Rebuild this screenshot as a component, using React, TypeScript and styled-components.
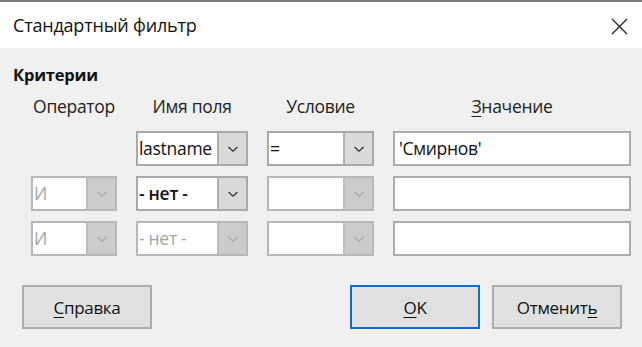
import React from "react"
import styled, { createGlobalStyle } from "styled-components"

const GlobalStyle = createGlobalStyle`
  html, body {
    margin: 0;
    padding: 0;
    background: #f0f0f0;
  }
  body {
    font-family: "Open Sans", "Noto Sans", sans-serif;
    color: #1a1a1a;
  }
`

const Window = styled.div`
  width: 642px;
  height: 347px;
  display: flex;
  flex-direction: column;
  background: #f0f0f0;
  overflow: hidden;
`

const TitleBar = styled.div`
  height: 46px;
  border-top: 2px solid #7a7a7a;
  background: #ffffff;
  display: flex;
  align-items: center;
  justify-content: space-between;
  padding: 0 14px 0 13px;
`

const Title = styled.div`
  font-size: 18px;
  color: #111;
  letter-spacing: -0.2px;
`

const CloseIcon = styled.svg`
  width: 17px;
  height: 17px;
  margin-top: 2px;
`

const Body = styled.div`
  flex: 1;
  display: flex;
  flex-direction: column;
  padding: 15px 11px 0 13px;
`

const SectionTitle = styled.div`
  font-size: 16.5px;
  font-weight: 700;
  color: #111;
  letter-spacing: -0.2px;
`

const Grid = styled.div`
  display: grid;
  grid-template-columns: 86px 112px 107px 238px;
  column-gap: 19px;
  row-gap: 10px;
  margin: 7px 0 0 18px;
`

const Header = styled.div`
  text-align: center;
  font-size: 17.5px;
  color: #222;
  letter-spacing: -0.3px;
  height: 28px;
  line-height: 26px;
`

const Accel = styled.span`
  text-decoration: underline;
  text-underline-offset: 3px;
  text-decoration-thickness: 1px;
`

const Combo = styled.div<{ $disabled?: boolean }>`
  height: 35px;
  box-sizing: border-box;
  border: 2px solid ${(p) => (p.$disabled ? "#b8b8b8" : "#a9a9a9")};
  background: #fff;
  display: flex;
`

const ComboText = styled.div<{ $disabled?: boolean; $bold?: boolean }>`
  flex: 1;
  padding-left: 1px;
  font-size: 17.5px;
  line-height: 31px;
  white-space: nowrap;
  overflow: hidden;
  letter-spacing: -0.3px;
  color: ${(p) => (p.$disabled ? "#a3a3a3" : "#111")};
  font-weight: ${(p) => (p.$bold ? 600 : 400)};
`

const ComboButton = styled.div<{ $disabled?: boolean }>`
  width: 27px;
  flex-shrink: 0;
  border-left: 2px solid ${(p) => (p.$disabled ? "#bdbdbd" : "#b0b0b0")};
  background: ${(p) => (p.$disabled ? "#cccccc" : "#dadada")};
  display: flex;
  align-items: center;
  justify-content: center;
`

const Input = styled.div`
  height: 35px;
  box-sizing: border-box;
  border: 2px solid #adadad;
  background: #fff;
  padding-left: 4px;
  font-size: 17.5px;
  line-height: 31px;
  letter-spacing: -0.3px;
  color: #111;
`

const Empty = styled.div``

const Footer = styled.div`
  display: flex;
  align-items: center;
  gap: 12px;
  margin-top: 29px;
  padding: 0 9px;
`

const Spacer = styled.div`
  flex: 1;
`

const Button = styled.div<{ $primary?: boolean }>`
  width: 130px;
  height: 44px;
  box-sizing: border-box;
  border: 2px solid ${(p) => (p.$primary ? "#0a6fd0" : "#adadad")};
  background: #e1e1e1;
  display: flex;
  align-items: center;
  justify-content: center;
  font-size: 17px;
  color: #111;
  letter-spacing: -0.3px;
`

function Chevron({ disabled }: { disabled?: boolean }) {
  return (
    <svg width="12" height="8" viewBox="0 0 12 8">
      <path
        d="M1.5 2 L6 6.2 L10.5 2"
        fill="none"
        stroke={disabled ? "#a9a9a9" : "#333"}
        strokeWidth="1.3"
      />
    </svg>
  )
}

function ComboBox({
  value,
  disabled,
  bold,
}: {
  value: string
  disabled?: boolean
  bold?: boolean
}) {
  return (
    <Combo $disabled={disabled}>
      <ComboText $disabled={disabled} $bold={bold}>
        {value}
      </ComboText>
      <ComboButton $disabled={disabled}>
        <Chevron disabled={disabled} />
      </ComboButton>
    </Combo>
  )
}

export default function App() {
  return (
    <Window>
      <GlobalStyle />
      <TitleBar>
        <Title>Стандартный фильтр</Title>
        <CloseIcon viewBox="0 0 17 17">
          <path d="M1 1 L16 16 M16 1 L1 16" stroke="#222" strokeWidth="1.3" fill="none" />
        </CloseIcon>
      </TitleBar>
      <Body>
        <SectionTitle>Критерии</SectionTitle>
        <Grid>
          <Header>Оператор</Header>
          <Header>Имя поля</Header>
          <Header>Условие</Header>
          <Header>
            <Accel>З</Accel>начение
          </Header>

          <Empty />
          <ComboBox value="lastname" />
          <ComboBox value="=" />
          <Input>'Смирнов'</Input>

          <ComboBox value="И" disabled />
          <ComboBox value="- нет -" bold />
          <ComboBox value="" disabled />
          <Input />

          <ComboBox value="И" disabled />
          <ComboBox value="- нет -" disabled />
          <ComboBox value="" disabled />
          <Input />
        </Grid>
        <Footer>
          <Button>
            <Accel>С</Accel>правка
          </Button>
          <Spacer />
          <Button $primary>
            <Accel>O</Accel>K
          </Button>
          <Button>
            Отменит<Accel>ь</Accel>
          </Button>
        </Footer>
      </Body>
    </Window>
  )
}
